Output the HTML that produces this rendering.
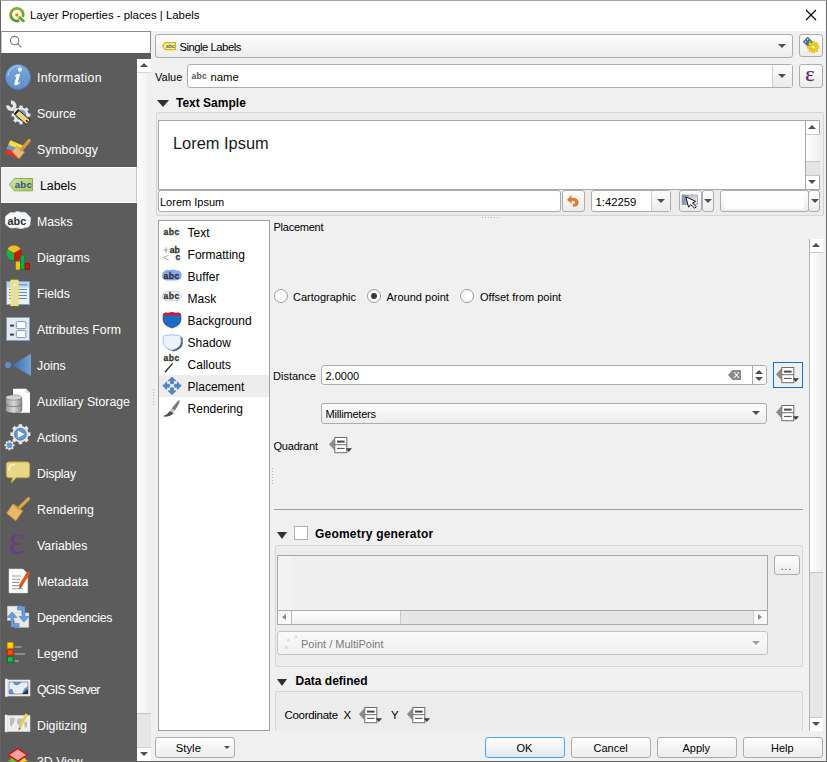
<!DOCTYPE html>
<html><head><meta charset="utf-8">
<style>
*{box-sizing:border-box;margin:0;padding:0}
html,body{width:827px;height:762px;overflow:hidden;background:#f0f0f0;font-family:"Liberation Sans",sans-serif;font-size:11px;color:#000}
.a{position:absolute}
.t{position:absolute;white-space:pre;line-height:1}
.btn{position:absolute;border:1px solid #adadad;border-radius:3px;background:linear-gradient(#fefefe,#ececec)}
.fld{position:absolute;border:1px solid #adadad;border-radius:3px;background:#fff}
.nav{position:absolute;left:1px;width:136px;height:36px}
.nav .t{left:36px;top:13px;font-size:12.3px;color:#fff}
.nav svg{position:absolute;left:4px;top:5px}
.li{position:absolute;left:159px;width:110px;height:22px}
.li .t{left:28.6px;top:5px;font-size:12px}
.li svg{position:absolute;left:4px;top:3px}
.arr{position:absolute;width:0;height:0;border-left:4px solid transparent;border-right:4px solid transparent;border-top:4px solid #505050}
.arru{position:absolute;width:0;height:0;border-left:4px solid transparent;border-right:4px solid transparent;border-bottom:4px solid #505050}
.radio{position:absolute;width:14px;height:14px;border-radius:50%;border:1px solid #9a9a9a;background:#fff}
.b{font-weight:bold}
</style></head><body>
<!-- window frame -->
<div class="a" style="left:0;top:0;width:827px;height:762px;border:1px solid #666;border-top-color:#a4a4a4"></div>
<div class="a" style="left:1px;top:1px;width:825px;height:30px;background:#fff"></div>
<svg class="a" style="left:0;top:0" width="30" height="30"><defs><linearGradient id="gq" x1="0" y1="0" x2="0" y2="1"><stop offset="0" stop-color="#8cae22"/><stop offset="1" stop-color="#4e9a2a"/></linearGradient></defs>
<path d="M22.8 17 A6.3 6.3 0 1 0 19.3 20.5" fill="none" stroke="url(#gq)" stroke-width="2.8"/>
<path d="M19.2 17.2 L23.4 21" stroke="#5ea434" stroke-width="2.9" stroke-linecap="round"/>
<path d="M17.6 15.8 L19 17.2" stroke="#e4e070" stroke-width="2"/>
<circle cx="16.7" cy="14.9" r="1.6" fill="#f07818"/></svg>
<div class="t" style="left:30px;top:10px;font-size:11.4px">Layer Properties - places | Labels</div>
<svg class="a" style="left:805px;top:9px" width="12" height="12"><path d="M1 1L11 11M11 1L1 11" stroke="#000" stroke-width="1.1"/></svg>

<!-- left panel -->
<div class="a" style="left:1px;top:31px;width:150px;height:22px;background:#fff;border:1px solid #8a8a8a;border-left-color:#bdbdbd;border-bottom:none;border-radius:0 0 3px 3px"></div>
<svg class="a" style="left:9px;top:35px" width="14" height="14"><circle cx="5.6" cy="5.6" r="4.2" fill="none" stroke="#7a7a7a" stroke-width="1.1"/><path d="M8.6 8.6L12.4 12.4" stroke="#7a7a7a" stroke-width="1.3"/></svg>
<div class="a" style="left:1px;top:53px;width:150px;height:708px;background:#5c5c5c"></div>
<!-- nav scrollbar -->
<div class="a" style="left:137px;top:59px;width:14px;height:702px;background:#fff"></div>
<div class="arru" style="left:140px;top:63px"></div>
<div class="a" style="left:137px;top:72px;width:14px;height:1px;background:#d8d8d8"></div>
<div class="a" style="left:137px;top:73px;width:14px;height:640px;background:linear-gradient(90deg,#fdfdfd,#ededed)"></div>
<div class="a" style="left:137px;top:713px;width:14px;height:34px;background:#e6e6e6;border-top:1px solid #c4c4c4"></div>
<div class="a" style="left:137px;top:747px;width:14px;height:1px;background:#d0d0d0"></div>
<div class="arr" style="left:140px;top:752px"></div>

<!--NAV-->
<div class="nav" style="top:59px"><svg width="36" height="36" style="left:-1px;top:0"><defs><linearGradient id="gi" x1="0" y1="0" x2="0" y2="1"><stop offset="0" stop-color="#7aa8dc"/><stop offset="1" stop-color="#5d8fcb"/></linearGradient></defs>
<circle cx="18" cy="18" r="12.5" fill="url(#gi)" stroke="#4f7fbf" stroke-width="0.8"/>
<path d="M8 17 A10.5 10.5 0 0 1 21 7.2" fill="none" stroke="#a8c6ea" stroke-width="1.2"/>
<circle cx="19.8" cy="10.6" r="2.1" fill="#fff"/>
<path d="M14.2 17.4 Q16 14.8 20.3 14.6 L17.8 23.6 Q18.6 24.4 20.5 22.3 Q19.9 25.6 15.9 26.2 Q13.6 26.3 14.6 23.2 L16.6 17.5 Z" fill="#fff"/></svg><div class="t" style="letter-spacing:0.3px">Information</div></div>
<div class="nav" style="top:95px"><svg width="36" height="36" style="left:-1px;top:0"><g transform="translate(21 20)"><circle r="7.6" fill="#e9e9e9"/><g fill="#e9e9e9">
<rect x="-1.6" y="-9.4" width="3.2" height="18.8"/><rect x="-1.6" y="-9.4" width="3.2" height="18.8" transform="rotate(45)"/><rect x="-1.6" y="-9.4" width="3.2" height="18.8" transform="rotate(90)"/><rect x="-1.6" y="-9.4" width="3.2" height="18.8" transform="rotate(135)"/></g>
<circle r="5.4" fill="#6f9fd6"/></g>
<path d="M10.9 7.4 A3.4 3.4 0 1 1 7.9 10.5" fill="none" stroke="#e6e6e6" stroke-width="3.6"/>
<path d="M13.6 13.6 L17 17" stroke="#d8d8d8" stroke-width="3.6"/>
<g transform="translate(16.2 16.8) rotate(41)"><rect x="0" y="-2.9" width="16" height="5.8" fill="#edd67c" stroke="#1e1e1e" stroke-width="0.9"/><rect x="0" y="-2.9" width="1.6" height="5.8" fill="#1e1e1e"/><circle cx="14" cy="0" r="1.1" fill="#333"/></g></svg><div class="t">Source</div></div>
<div class="nav" style="top:131px"><svg width="36" height="36" style="left:-1px;top:0"><path d="M10.3 9.2 L23 14.5 L21 19 L8.2 14 Z" fill="#f0e040"/>
<path d="M8.2 14 L21 19 L19.2 23 L6.4 17.8 Z" fill="#6a9ad4"/>
<path d="M6.4 17.8 L19.2 23 L18 27.8 L4.6 21.8 Z" fill="#e83020"/>
<path d="M16.6 15.4 L24.6 21 L19 27.8 L12 20.6 Z" fill="#e2bd7e" stroke="#c89040" stroke-width="0.8"/>
<path d="M21.2 18.8 L29.2 9.6" stroke="#d89a40" stroke-width="3.4" stroke-linecap="round"/></svg><div class="t">Symbology</div></div>
<div class="nav" style="top:167px;background:#f0f0f0;border-top:1px solid #fff;border-bottom:1px solid #fff;border-right:1px solid #c4c4c4"><svg width="36" height="36" style="left:-1px;top:-1px"><defs><linearGradient id="gl" x1="0" y1="0" x2="1" y2="1"><stop offset="0" stop-color="#cfe4b0"/><stop offset="1" stop-color="#a9c65a"/></linearGradient></defs>
<path d="M9.5 17.5 L14.5 11.5 H32.5 V23.8 H14.5 Z" fill="url(#gl)" stroke="#8eab4e" stroke-width="1"/>
<text x="14.8" y="21.2" font-family="Liberation Sans" font-weight="bold" font-size="9.6" fill="#2f5478" letter-spacing="0.2">abc</text></svg><div class="t" style="left:39px;top:12px;color:#000">Labels</div></div>
<div class="nav" style="top:203px"><svg width="36" height="36" style="left:-1px;top:0"><path d="M8 11.5 Q10 8.5 14 10 Q17 7.5 21 9.5 Q26 8.5 28 12 Q32 14.5 30 19 Q31 24 25.5 24.5 Q21 26.5 16 24.5 Q11 26 8 23.5 Q4 21 5.5 17 Q4.5 13 8 11.5 Z" fill="#f6f8fc" stroke="#dfe4ee" stroke-width="0.8"/>
<text x="7.6" y="21.8" font-family="Liberation Sans" font-weight="bold" font-size="10.8" fill="#2e2e32">abc</text></svg><div class="t">Masks</div></div>
<div class="nav" style="top:239px"><svg width="36" height="36" style="left:-1px;top:0"><path d="M14 14 L14 6.3 A7.7 7.7 0 0 1 20.7 10.2 Z" fill="#f2c21a"/>
<path d="M14 14 L7.3 10.2 A7.7 7.7 0 0 1 14 6.3 Z" fill="#f2c21a"/>
<path d="M14 14 L20.7 10.2 A7.7 7.7 0 0 1 14 21.7 Z" fill="#d0140c"/>
<path d="M14 14 L14 21.7 A7.7 7.7 0 0 1 7.3 10.2 Z" fill="#18b04a"/>
<circle cx="14" cy="14" r="7.7" fill="none" stroke="#404020" stroke-width="0.5" opacity="0.6"/>
<rect x="15.8" y="22.6" width="4.2" height="8" fill="#f4c20e"/>
<rect x="20.4" y="16" width="4.4" height="14.6" fill="#16a848" stroke="#0c6a2a" stroke-width="0.6"/>
<rect x="25.4" y="24.2" width="4.2" height="6.4" fill="#c8140a" stroke="#7a0a04" stroke-width="0.6"/></svg><div class="t">Diagrams</div></div>
<div class="nav" style="top:275px"><svg width="36" height="36" style="left:-1px;top:0"><rect x="6.5" y="6.5" width="23" height="23" fill="#eeeeee" stroke="#7aa0cc" stroke-width="1"/>
<rect x="7" y="7" width="22" height="5.5" fill="#b8d4ee"/>
<g stroke="#5a8cc4" stroke-width="1.1"><path d="M16 9.8H27M9 14.5H27M9 17.5H27M9 20.5H27M9 23.5H27"/></g>
<rect x="11" y="5.3" width="7" height="25.2" fill="#e6dcb0" stroke="#f4ec40" stroke-width="1.2"/>
<circle cx="14.5" cy="10" r="1" fill="#fff"/></svg><div class="t">Fields</div></div>
<div class="nav" style="top:311px"><svg width="36" height="36" style="left:-1px;top:0"><rect x="6.5" y="6.5" width="23" height="23" fill="#e8e8e8" stroke="#7aa0cc" stroke-width="1"/>
<rect x="10" y="13.6" width="4" height="2" fill="#2a4a6a"/><rect x="10" y="22.6" width="4" height="2" fill="#2a4a6a"/>
<rect x="16.3" y="10.6" width="9.6" height="7" rx="1" fill="#fff" stroke="#6a9ad0" stroke-width="1"/>
<rect x="16.3" y="19.6" width="9.6" height="7" rx="1" fill="#fff" stroke="#6a9ad0" stroke-width="1"/></svg><div class="t">Attributes Form</div></div>
<div class="nav" style="top:347px"><svg width="36" height="36" style="left:-1px;top:0"><defs><linearGradient id="gj" x1="0" y1="0" x2="1" y2="0"><stop offset="0" stop-color="#3a6aa8"/><stop offset="1" stop-color="#72a2d8"/></linearGradient></defs>
<circle cx="8" cy="17.9" r="3" fill="#5f8fcb"/>
<path d="M12.2 17.9 L31 6.8 L31 29 Z" fill="url(#gj)"/></svg><div class="t">Joins</div></div>
<div class="nav" style="top:383px"><svg width="36" height="36" style="left:-1px;top:0"><path d="M13 5.8 H26 L30 9.8 V29.7 H13 Z" fill="#fff"/><path d="M26 5.8 V9.8 H30" fill="#d8d8d8"/>
<defs><linearGradient id="ga" x1="0" y1="0" x2="1" y2="0"><stop offset="0" stop-color="#9a9a9a"/><stop offset="0.5" stop-color="#d8d8d8"/><stop offset="1" stop-color="#8a8a8a"/></linearGradient></defs>
<path d="M5.7 14.5 V27.5 A8 2.6 0 0 0 21.8 27.5 V14.5 Z" fill="url(#ga)" stroke="#505050" stroke-width="0.5"/>
<ellipse cx="13.75" cy="14.5" rx="8" ry="2.6" fill="#d4d4d4" stroke="#606060" stroke-width="0.5"/>
<path d="M5.7 21 A8 2.6 0 0 0 21.8 21" fill="none" stroke="#555" stroke-width="0.6"/></svg><div class="t">Auxiliary Storage</div></div>
<div class="nav" style="top:419px"><svg width="36" height="36" style="left:-1px;top:0"><g fill="#e6e6e6"><circle cx="20.4" cy="15.2" r="8.2"/>
<g transform="translate(20.4 15.2)"><rect x="-1.8" y="-10" width="3.6" height="20"/><rect x="-10" y="-1.8" width="20" height="3.6"/><rect x="-1.8" y="-10" width="3.6" height="20" transform="rotate(45)"/><rect x="-1.8" y="-10" width="3.6" height="20" transform="rotate(-45)"/></g>
<circle cx="9.5" cy="26.2" r="3.8"/>
<g transform="translate(9.5 26.2)"><rect x="-1" y="-5" width="2" height="10"/><rect x="-5" y="-1" width="10" height="2"/><rect x="-1" y="-5" width="2" height="10" transform="rotate(45)"/><rect x="-1" y="-5" width="2" height="10" transform="rotate(-45)"/></g></g>
<circle cx="20.4" cy="15.2" r="6" fill="#6496d0" stroke="#3d6aa6" stroke-width="0.6"/>
<path d="M17.8 11.6 L24.4 15.2 L17.8 18.8 Z" fill="#fff"/>
<circle cx="9.5" cy="26.2" r="2.8" fill="#6496d0"/></svg><div class="t">Actions</div></div>
<div class="nav" style="top:455px"><svg width="36" height="36" style="left:-1px;top:0"><path d="M9 7 H27 Q29.6 7 29.6 9.6 V20 Q29.6 22.7 27 22.7 H16 L11.5 27.8 L12.5 22.7 H9 Q6.3 22.7 6.3 20 V9.6 Q6.3 7 9 7 Z" fill="#e6d886" stroke="#c9a83e" stroke-width="1"/>
<path d="M9 16 Q8.4 9.2 15 9.4" fill="none" stroke="#fffbe8" stroke-width="1.2"/></svg><div class="t" style="letter-spacing:-0.2px">Display</div></div>
<div class="nav" style="top:491px"><svg width="36" height="36" style="left:-1px;top:0"><path d="M12.8 13.2 L22.6 20 L15.8 29.8 L6.8 22.2 Z" fill="#e6b86a" stroke="#cf9a40" stroke-width="0.8"/>
<path d="M18.6 17.4 L28.4 7.8" stroke="#e0a440" stroke-width="3.2" stroke-linecap="round"/>
<path d="M14 14 L22 20" stroke="#d8962e" stroke-width="1.6"/></svg><div class="t">Rendering</div></div>
<div class="nav" style="top:527px"><svg width="36" height="36" style="left:-1px;top:0"><text x="8.2" y="27" font-family="Liberation Serif" font-size="40" fill="#6b3a8f">ε</text></svg><div class="t">Variables</div></div>
<div class="nav" style="top:563px"><svg width="36" height="36" style="left:-1px;top:0"><path d="M9 6 H23 L27.7 10.7 V29.9 H9 Z" fill="#fff" stroke="#d8d8d8" stroke-width="0.5"/>
<g stroke="#9a9a9a" stroke-width="1.1"><path d="M12 13H21M12 16.2H20M12 19.4H19M12 22.6H21M12 25.8H23"/></g>
<path d="M20 23.6 L28.6 9.6" stroke="#e25a10" stroke-width="3.4"/>
<path d="M20.6 22.6 L19.3 25.4 L21.6 23.2" fill="#555" stroke="#666" stroke-width="1"/></svg><div class="t">Metadata</div></div>
<div class="nav" style="top:599px"><svg width="36" height="36" style="left:-1px;top:0"><rect x="7.5" y="7.2" width="14" height="14" fill="#ececec" stroke="#d4d4d4" stroke-width="0.6"/>
<rect x="14.8" y="14" width="14" height="14.2" fill="#e8e8e6" stroke="#d4d4d4" stroke-width="0.6"/>
<path d="M11 28 V18.5 H7 L12 13 L17 18.5 H13.5 V24.5 H19 V28 Z" fill="#6a9ee0" stroke="#4a7ec0" stroke-width="0.6"/>
<path d="M17.5 7.6 H25 V17.5 H29 L24 23 L19 17.5 H22 V11 H17.5 Z" fill="#6a9ee0" stroke="#4a7ec0" stroke-width="0.6"/></svg><div class="t" style="letter-spacing:-0.3px">Dependencies</div></div>
<div class="nav" style="top:635px"><svg width="36" height="36" style="left:-1px;top:0"><rect x="7.3" y="7.6" width="5.8" height="5.6" fill="#ffd800" stroke="#e08a00" stroke-width="0.8"/>
<rect x="7.3" y="14.8" width="5.8" height="5.4" fill="#ff4a00" stroke="#b02a00" stroke-width="0.8"/>
<rect x="7.3" y="21.8" width="5.8" height="5.4" fill="#10c050" stroke="#0a5a2a" stroke-width="0.8"/>
<g stroke="#9c9c9c" stroke-width="1.6"><path d="M14.5 12H21.5M14.5 19H25M14.5 26H19"/></g></svg><div class="t">Legend</div></div>
<div class="nav" style="top:671px"><svg width="36" height="36" style="left:-1px;top:0"><path d="M5.5 9 H30 V25 H5.5 Z" fill="#f2f2f2" stroke="#d8d8d8" stroke-width="0.6"/>
<rect x="5.2" y="8" width="2.5" height="17.5" fill="#fafafa" stroke="#cfcfcf" stroke-width="0.5"/>
<path d="M9 11 H28 V23 H9 Z" fill="#e8eef6" stroke="#444" stroke-width="0.5"/>
<path d="M13 11 Q14 15 18 14 Q21 12 22 11 Z M9 20 Q11 16 12.5 19 Q13 22 15 23 H9 Z M24 18 Q27 16 28 15 V23 H22 Z" fill="#5a8ed0"/>
<path d="M22 23 L28 18 V23 Z" fill="#333"/></svg><div class="t" style="letter-spacing:-0.7px">QGIS Server</div></div>
<div class="nav" style="top:707px"><svg width="36" height="36" style="left:-1px;top:0"><path d="M5.5 8.5 H30 V24.5 H5.5 Z" fill="#eeeeee" stroke="#d6d6d6" stroke-width="0.6"/>
<rect x="5" y="8" width="2.5" height="17" fill="#f8f8f8" stroke="#d0d0d0" stroke-width="0.5"/>
<path d="M10 11 Q12 10 15 11 L14 16 Q12 17 12 20 L10 18 Z M17 12 Q21 11 24 12 L22 18 Q19 20 17 16 Z M24 16 L27 14 L27 20 L25 21 Z" fill="#bdbdbd"/>
<path d="M19.6 20.6 L26.8 7" stroke="#e8d44a" stroke-width="2.8"/>
<path d="M19.6 20.6 L18.8 23 L20.8 21.2" fill="#666" stroke="#777" stroke-width="0.8"/></svg><div class="t">Digitizing</div></div>
<div class="nav" style="top:743px"><svg width="36" height="36" style="left:-1px;top:0"><path d="M8 18 L12 14.5 L18 20 Z" fill="#64c81e"/>
<path d="M27.6 18 L24 14.5 L18 20 Z" fill="#f0d020"/>
<path d="M17.8 5.6 L27.4 11.8 L17.8 18 L8.2 11.8 Z" fill="#f4a0a0" stroke="#c81818" stroke-width="1.4"/></svg><div class="t">3D View</div></div>
<!--/NAV-->

<!-- right panel top -->
<div class="btn" style="left:155px;top:34px;width:638px;height:24px"></div>
<svg class="a" style="left:161px;top:41px" width="17" height="11"><path d="M1.6 5.1 L4.3 1.6 H14.5 V8.7 H4.3 Z" fill="#f7eea6" stroke="#d6b214" stroke-width="1.2"/><text x="5" y="7.4" font-size="5.2" font-family="Liberation Sans" font-weight="bold" fill="#6a6440">abc</text></svg>
<div class="t" style="left:179.5px;top:42px;font-size:11.3px;letter-spacing:-0.5px">Single Labels</div>
<div class="arr" style="left:777.5px;top:44px"></div>
<div class="btn" style="left:799px;top:34px;width:24px;height:23px"></div>
<svg class="a" style="left:799px;top:34px" width="24" height="24"><g transform="rotate(45 9 8)"><rect x="5" y="4.5" width="8" height="7" fill="#46708e"/><g fill="#dfe8f0"><circle cx="7" cy="6.5" r="0.7"/><circle cx="10" cy="6.5" r="0.7"/><circle cx="7" cy="9.5" r="0.7"/></g></g>
<g transform="translate(14.2 13.1)" fill="#f2d21a" stroke="#c8a810" stroke-width="0.4"><circle r="4.3"/><g><rect x="-1.2" y="-5.8" width="2.4" height="11.6"/><rect x="-1.2" y="-5.8" width="2.4" height="11.6" transform="rotate(45)"/><rect x="-1.2" y="-5.8" width="2.4" height="11.6" transform="rotate(90)"/><rect x="-1.2" y="-5.8" width="2.4" height="11.6" transform="rotate(135)"/></g></g><circle cx="14.2" cy="13.1" r="1.3" fill="#fff8d0"/></svg>

<div class="t" style="left:155px;top:72px">Value</div>
<div class="fld" style="left:187px;top:64px;width:606px;height:24px"></div>
<div class="a" style="left:772px;top:65px;width:20px;height:22px;border-left:1px solid #d0d0d0;background:linear-gradient(#fbfbfb,#ececec)"></div>
<div class="arr" style="left:777.5px;top:74px"></div>
<div class="t b" style="left:191.5px;top:72px;font-size:8.6px;color:#5a5a5a;letter-spacing:0.2px">abc</div>
<div class="t" style="left:210.5px;top:72px;font-size:11.3px">name</div>
<div class="btn" style="left:799px;top:64px;width:24px;height:24px"></div>
<svg class="a" style="left:799px;top:64px" width="24" height="24"><text x="6.2" y="17" font-family="Liberation Serif" font-size="22" fill="#5a2a70" stroke="#5a2a70" stroke-width="0.25">ε</text></svg>

<div class="a" style="left:157px;top:100px;width:0;height:0;border-left:6px solid transparent;border-right:6px solid transparent;border-top:7px solid #303030"></div>
<div class="t b" style="left:176px;top:97px;font-size:12px">Text Sample</div>
<div class="a" style="left:156px;top:112px;width:668px;height:104px;border:1px solid #d6d6d6;border-radius:2px;background:#ececec"></div>
<div class="a" style="left:158px;top:120px;width:662px;height:70px;background:#fff;border:1px solid #a8a8a8"></div>
<div class="t" style="left:173px;top:135px;font-size:16.4px;color:#1a1a1a">Lorem Ipsum</div>
<!-- preview scrollbar -->
<div class="a" style="left:805px;top:121px;width:14px;height:68px;background:#fff;border-left:1px solid #a8a8a8"></div>
<div class="a" style="left:806px;top:134px;width:14px;height:1px;background:#c8c8c8"></div>
<div class="a" style="left:806px;top:135px;width:14px;height:26px;background:linear-gradient(90deg,#fefefe,#efefef)"></div>
<div class="a" style="left:806px;top:161px;width:14px;height:1px;background:#c8c8c8"></div>
<div class="a" style="left:806px;top:175px;width:14px;height:1px;background:#c8c8c8"></div>
<div class="arru" style="left:808px;top:125px"></div>
<div class="a" style="left:806px;top:162px;width:14px;height:13px;background:#e4e4e4"></div>
<div class="arr" style="left:808px;top:180px"></div>

<div class="fld" style="left:158px;top:190px;width:403px;height:22px"></div>
<div class="t" style="left:160px;top:197px;font-size:11px">Lorem Ipsum</div>
<div class="btn" style="left:562px;top:190px;width:23px;height:22px"></div>
<svg class="a" style="left:562px;top:190px" width="23" height="22"><path d="M5 10 L9.2 5 L9.6 7.8 Q16.5 7.6 16.6 12.6 Q16.6 16.8 11.4 17 L10.6 14.3 Q13.3 14.1 13.3 12.3 Q13.2 10.6 9.8 10.8 L9.5 13.6 Z" fill="#e57a32"/></svg>
<div class="fld" style="left:591px;top:190px;width:80px;height:22px"></div>
<div class="a" style="left:651px;top:191px;width:19px;height:20px;border-left:1px solid #d0d0d0;background:linear-gradient(#fbfbfb,#ececec)"></div>
<div class="arr" style="left:657px;top:199px"></div>
<div class="t" style="left:595.5px;top:197px;font-size:11.3px">1:42259</div>
<div class="btn" style="left:679px;top:190px;width:23px;height:22px"></div>
<svg class="a" style="left:679px;top:190px" width="23" height="22"><defs><linearGradient id="gm" x1="0" y1="0" x2="1" y2="0"><stop offset="0" stop-color="#6a86a8"/><stop offset="0.5" stop-color="#b8cce0"/><stop offset="1" stop-color="#dcdcdc"/></linearGradient></defs>
<path d="M3 5 H18.5 V14.5 H3 Z" fill="url(#gm)" stroke="#8a8a8a" stroke-width="0.6"/><rect x="3" y="4.5" width="2.5" height="10.5" fill="#8a9aaa"/>
<path d="M6.8 6.8 L9.6 17.2 L11.6 14.6 L15.8 18.2 L17.4 16.6 L13.4 13 L16.6 11.4 Z" fill="#fff" stroke="#111" stroke-width="1" stroke-linejoin="round"/></svg>
<div class="btn" style="left:702px;top:190px;width:12px;height:22px"></div>
<div class="arr" style="left:704px;top:199px;border-width:4px 4px 0 4px"></div>
<div class="btn" style="left:720px;top:190px;width:89px;height:22px"></div>
<div class="a" style="left:724px;top:192px;width:80px;height:17px;background:#fdfdfd;border-radius:3px"></div>
<div class="btn" style="left:808px;top:190px;width:12px;height:22px"></div>
<div class="arr" style="left:810.5px;top:199px"></div>

<!-- list box -->
<div class="a" style="left:158px;top:220px;width:112px;height:511px;background:#fff;border:1px solid #a0a0a0"></div>
<div class="a" style="left:159px;top:375px;width:110px;height:22px;background:#ededed"></div>
<!--LB-->
<div class="li" style="top:222px"><svg width="24" height="22" style="left:0;top:0"><text x="4.6" y="12.9" font-family="Liberation Sans" font-weight="bold" font-size="8.6" fill="#333" stroke="#333" stroke-width="0.3" letter-spacing="0.4">abc</text></svg><div class="t">Text</div></div>
<div class="li" style="top:244px"><svg width="24" height="22" style="left:0;top:0"><path d="M4.2 6 H9.6 M6.9 3.3 V8.7" stroke="#a8a8a8" stroke-width="1.2"/>
<path d="M9.6 11.2 L4.4 13.6 L9.6 16" fill="none" stroke="#999" stroke-width="0.9"/>
<text x="10.8" y="8.6" font-family="Liberation Sans" font-weight="bold" font-size="8.6" fill="#333" stroke="#333" stroke-width="0.3">ab</text>
<text x="16.4" y="16.3" font-family="Liberation Sans" font-weight="bold" font-size="8.6" fill="#333" stroke="#333" stroke-width="0.3">c</text></svg><div class="t">Formatting</div></div>
<div class="li" style="top:266px"><svg width="24" height="22" style="left:0;top:0"><path d="M5.5 5 Q8 3 11 4.2 Q14 3 17 4.2 Q21 4 22.4 7.5 Q23.4 11.5 20.5 13.6 Q17 15 13 14.2 Q9 15 6 14 Q2.6 12.5 3.2 9 Q3.2 6 5.5 5 Z" fill="#86a8f2"/>
<text x="4.6" y="12.7" font-family="Liberation Sans" font-weight="bold" font-size="8.6" fill="#333" stroke="#333" stroke-width="0.3" letter-spacing="0.4">abc</text></svg><div class="t">Buffer</div></div>
<div class="li" style="top:288px"><svg width="24" height="22" style="left:0;top:0"><path d="M5.8 4.6 Q8 2.6 11 3.6 Q14 2.4 17 3.6 Q20.8 3.4 22 6.5 Q23 10 20.5 12 Q17 13.2 13 12.6 Q9 13.2 6 12.4 Q3 11 3.5 8 Q3.4 5.6 5.8 4.6 Z" fill="#f4f6fc" stroke="#b8bcc8" stroke-width="0.7"/>
<text x="4.6" y="11.3" font-family="Liberation Sans" font-weight="bold" font-size="8.6" fill="#333" stroke="#333" stroke-width="0.3" letter-spacing="0.4">abc</text></svg><div class="t">Mask</div></div>
<div class="li" style="top:310px"><svg width="24" height="22" style="left:0;top:0"><defs><clipPath id="cb"><path d="M4.2 4.2 Q6.5 2.2 9 3.2 Q13 1.6 17 3.2 Q19.5 2.2 21.8 4.2 L22 9.5 Q21.8 15.6 13 18 Q4.2 15.6 4 9.5 Z"/></clipPath></defs>
<path d="M4.2 4.2 Q6.5 2.2 9 3.2 Q13 1.6 17 3.2 Q19.5 2.2 21.8 4.2 L22 9.5 Q21.8 15.6 13 18 Q4.2 15.6 4 9.5 Z" fill="#1a6cc4" stroke="#402a4a" stroke-width="0.6"/>
<rect x="0" y="0" width="24" height="5.2" fill="#ee1010" clip-path="url(#cb)"/></svg><div class="t">Background</div></div>
<div class="li" style="top:332px"><svg width="24" height="22" style="left:0;top:0"><path d="M4.2 4.2 Q6.5 2.2 9 3.2 Q13 1.6 17 3.2 Q19.5 2.2 21.8 4.2 L22 9.5 Q21.8 15.6 13 18 Q4.2 15.6 4 9.5 Z" fill="#4a4a4a" transform="translate(1.8 1.6)" opacity="0.9"/>
<path d="M4.2 4.2 Q6.5 2.2 9 3.2 Q13 1.6 17 3.2 Q19.5 2.2 21.8 4.2 L22 9.5 Q21.8 15.6 13 18 Q4.2 15.6 4 9.5 Z" fill="#eef2fc" stroke="#8eb2f4" stroke-width="0.8" transform="translate(0 0.2)"/></svg><div class="t">Shadow</div></div>
<div class="li" style="top:354px"><svg width="24" height="22" style="left:0;top:0"><text x="4.6" y="7.4" font-family="Liberation Sans" font-weight="bold" font-size="8.6" fill="#333" stroke="#333" stroke-width="0.3" letter-spacing="0.4">abc</text>
<path d="M6 18.2 L13.6 9.4" stroke="#333" stroke-width="1.4"/></svg><div class="t">Callouts</div></div>
<div class="li" style="top:376px"><svg width="24" height="22" style="left:0;top:0"><g fill="#4d88c4" stroke="#3a6ea6" stroke-width="0.5" stroke-linejoin="round">
<path d="M13 0.9 L17 4.8 H14.6 V7.6 Q13 8.4 11.4 7.6 V4.8 H9 Z"/>
<path d="M13 18.7 L17 14.8 H14.6 V12 Q13 11.2 11.4 12 V14.8 H9 Z"/>
<path d="M3.8 9.8 L7.7 5.8 V8.3 H10.4 Q11.2 9.8 10.4 11.3 H7.7 V13.8 Z"/>
<path d="M22.2 9.8 L18.3 5.8 V8.3 H15.6 Q14.8 9.8 15.6 11.3 H18.3 V13.8 Z"/></g></svg><div class="t">Placement</div></div>
<div class="li" style="top:398px"><svg width="24" height="22" style="left:0;top:0"><path d="M20.4 2 Q21.6 3.6 18.4 8.6 L16 12.6 L12.4 10.8 L16.2 6 Q18.8 2.6 20.4 2 Z" fill="#7c7e7c"/>
<path d="M12.4 10.8 L16 12.6 L14.6 15 L10.8 13 Z" fill="#c4c6c4"/>
<path d="M10.8 13 L14.6 15 Q12.4 18.6 5 18.8 Q4.4 18.2 5.2 17.4 Q8.8 16.2 10.8 13 Z" fill="#4e504e"/></svg><div class="t">Rendering</div></div>
<!--/LB-->

<!-- placement area -->
<div class="t" style="left:273.5px;top:222px;letter-spacing:-0.25px">Placement</div>
<div class="radio" style="left:274px;top:289px"></div>
<div class="t" style="left:293px;top:292px">Cartographic</div>
<div class="radio" style="left:367px;top:289px"></div>
<div class="a" style="left:370.8px;top:292.8px;width:6.4px;height:6.4px;border-radius:50%;background:#383838"></div>
<div class="t" style="left:386.5px;top:292px">Around point</div>
<div class="radio" style="left:460px;top:289px"></div>
<div class="t" style="left:480px;top:292px">Offset from point</div>

<div class="t" style="left:273px;top:371px">Distance</div>
<div class="fld" style="left:321px;top:365px;width:446px;height:20px"></div>
<div class="t" style="left:325.5px;top:371px">2.0000</div>
<div class="a" style="left:752px;top:366px;width:14px;height:18px;border-left:1px solid #a8a8a8;background:#fcfcfc;border-radius:0 2px 2px 0"></div>
<div class="arru" style="left:755px;top:369.5px"></div>
<div class="arr" style="left:755px;top:377px"></div>
<svg class="a" style="left:728px;top:370px" width="13" height="10"><path d="M0 5 L4.4 0 H13 V10 H4.4 Z" fill="#8a8a8a"/><path d="M6 2 L11 8 M11 2 L6 8" stroke="#fff" stroke-width="1.1"/></svg>
<div class="a" style="left:773px;top:362px;width:30px;height:26px;border:1px solid #0a74d8;background:#f2f0ee"></div>
<svg class="a" style="left:775px;top:366px" width="26" height="18"><path d="M1 8.3 L6.6 2 V14.6 Z" fill="#8c8c8c"/><rect x="6.8" y="1.5" width="12" height="15.2" fill="#fff" stroke="#6e6e6e" stroke-width="1"/><path d="M6.8 8.7 H18.8" stroke="#6e6e6e" stroke-width="1"/><rect x="9" y="4.6" width="7.6" height="2" fill="#4a4a4a"/><rect x="9" y="11.9" width="7.6" height="1" fill="#4a4a4a"/><path d="M17.6 12.3 H24 L20.8 16 Z" fill="#3e3e3e"/></svg>
<div class="btn" style="left:321px;top:403px;width:446px;height:21px"></div>
<div class="t" style="left:325.5px;top:409px;letter-spacing:-0.2px">Millimeters</div>
<div class="arr" style="left:752px;top:411px"></div>
<svg class="a" style="left:775px;top:404px" width="26" height="18"><path d="M1 8.3 L6.6 2 V14.6 Z" fill="#8c8c8c"/><rect x="6.8" y="1.5" width="12" height="15.2" fill="#fff" stroke="#6e6e6e" stroke-width="1"/><path d="M6.8 8.7 H18.8" stroke="#6e6e6e" stroke-width="1"/><rect x="9" y="4.6" width="7.6" height="2" fill="#4a4a4a"/><rect x="9" y="11.9" width="7.6" height="1" fill="#4a4a4a"/><path d="M17.6 12.3 H24 L20.8 16 Z" fill="#3e3e3e"/></svg>
<div class="t" style="left:273.5px;top:441px;letter-spacing:-0.2px">Quadrant</div>
<svg class="a" style="left:328px;top:436px" width="26" height="18"><path d="M1 8.3 L6.6 2 V14.6 Z" fill="#8c8c8c"/><rect x="6.8" y="1.5" width="12" height="15.2" fill="#fff" stroke="#6e6e6e" stroke-width="1"/><path d="M6.8 8.7 H18.8" stroke="#6e6e6e" stroke-width="1"/><rect x="9" y="4.6" width="7.6" height="2" fill="#4a4a4a"/><rect x="9" y="11.9" width="7.6" height="1" fill="#4a4a4a"/><path d="M17.6 12.3 H24 L20.8 16 Z" fill="#3e3e3e"/></svg>
<div class="a" style="left:272px;top:468px;width:1px;height:18px;background:repeating-linear-gradient(#b0b0b0 0 1px,transparent 1px 3px)"></div>
<div class="a" style="left:153px;top:389px;width:1px;height:16px;background:repeating-linear-gradient(#b0b0b0 0 1px,transparent 1px 3px)"></div>
<div class="a" style="left:482px;top:217px;width:17px;height:1px;background:repeating-linear-gradient(90deg,#b0b0b0 0 1px,transparent 1px 3px)"></div>

<div class="a" style="left:274px;top:509px;width:529px;height:1px;background:#a0a0a0"></div>
<div class="a" style="left:277px;top:532px;width:0;height:0;border-left:5.5px solid transparent;border-right:5.5px solid transparent;border-top:7px solid #303030"></div>
<div class="a" style="left:294px;top:526px;width:14px;height:14px;background:#fff;border:1px solid #b0b0b0"></div>
<div class="t b" style="left:315px;top:528px;font-size:12px;letter-spacing:0.2px">Geometry generator</div>
<div class="a" style="left:275px;top:545px;width:528px;height:122px;border:1px solid #d6d6d6;border-radius:2px;background:#ececec"></div>
<div class="a" style="left:277px;top:555px;width:491px;height:70px;border:1px solid #a8a8a8;background:#efefef"></div>
<div class="a" style="left:278px;top:556px;width:14px;height:54px;background:#f3f3f3"></div>
<div class="a" style="left:278px;top:610px;width:489px;height:14px;background:#e6e6e6;border-top:1px solid #a8a8a8"></div>
<div class="a" style="left:278px;top:611px;width:13px;height:13px;background:#f8f8f8"></div>
<div class="a" style="left:282px;top:613.5px;width:0;height:0;border-top:3.5px solid transparent;border-bottom:3.5px solid transparent;border-right:4px solid #8a8a8a"></div>
<div class="a" style="left:291px;top:611px;width:110px;height:13px;background:linear-gradient(#fefefe,#f0f0f0);border-left:1px solid #b8b8b8;border-right:1px solid #c8c8c8"></div>
<div class="a" style="left:753px;top:611px;width:14px;height:13px;background:#f8f8f8;border-left:1px solid #c8c8c8"></div>
<div class="a" style="left:758px;top:613.5px;width:0;height:0;border-top:3.5px solid transparent;border-bottom:3.5px solid transparent;border-left:4px solid #8a8a8a"></div>
<div class="btn" style="left:774px;top:555px;width:26px;height:20px"></div>
<div class="t" style="left:780.5px;top:561px;color:#3a3a6a;font-size:11px;letter-spacing:0.8px">...</div>
<div class="btn" style="left:277px;top:631px;width:491px;height:24px;border-color:#c4c4c4;background:linear-gradient(#fafafa,#f0f0f0)"></div>
<svg class="a" style="left:283px;top:634px" width="16" height="16"><g fill="none" stroke="#c8c8c8" stroke-width="0.8"><circle cx="5.4" cy="6.3" r="1"/><circle cx="12.7" cy="2.9" r="1"/><circle cx="3.4" cy="13.4" r="1"/></g></svg>
<div class="t" style="left:301px;top:638.5px;color:#7a7a7a">Point / MultiPoint</div>
<div class="arr" style="left:752px;top:641px;border-top-color:#a0a0a0"></div>

<div class="a" style="left:277px;top:678.5px;width:0;height:0;border-left:5.5px solid transparent;border-right:5.5px solid transparent;border-top:7px solid #303030"></div>
<div class="t b" style="left:295.5px;top:675px;font-size:12px">Data defined</div>
<div class="a" style="left:275px;top:691px;width:528px;height:45px;border:1px solid #d6d6d6;border-radius:2px;background:#ececec"></div>
<div class="t" style="left:284.5px;top:710px;font-size:11.5px;letter-spacing:-0.3px">Coordinate</div>
<div class="t" style="left:343.5px;top:710px;font-size:11.5px">X</div>
<svg class="a" style="left:358px;top:706px" width="26" height="18"><path d="M1 8.3 L6.6 2 V14.6 Z" fill="#8c8c8c"/><rect x="6.8" y="1.5" width="12" height="15.2" fill="#fff" stroke="#6e6e6e" stroke-width="1"/><path d="M6.8 8.7 H18.8" stroke="#6e6e6e" stroke-width="1"/><rect x="9" y="4.6" width="7.6" height="2" fill="#4a4a4a"/><rect x="9" y="11.9" width="7.6" height="1" fill="#4a4a4a"/><path d="M17.6 12.3 H24 L20.8 16 Z" fill="#3e3e3e"/></svg>
<div class="t" style="left:391px;top:710px;font-size:11.5px">Y</div>
<svg class="a" style="left:406px;top:706px" width="26" height="18"><path d="M1 8.3 L6.6 2 V14.6 Z" fill="#8c8c8c"/><rect x="6.8" y="1.5" width="12" height="15.2" fill="#fff" stroke="#6e6e6e" stroke-width="1"/><path d="M6.8 8.7 H18.8" stroke="#6e6e6e" stroke-width="1"/><rect x="9" y="4.6" width="7.6" height="2" fill="#4a4a4a"/><rect x="9" y="11.9" width="7.6" height="1" fill="#4a4a4a"/><path d="M17.6 12.3 H24 L20.8 16 Z" fill="#3e3e3e"/></svg>

<!-- scroll area scrollbar -->
<div class="a" style="left:809px;top:239px;width:14px;height:492px;background:#fff;border-left:1px solid #b4b4b4"></div>
<div class="arru" style="left:812px;top:243px"></div>
<div class="a" style="left:810px;top:252px;width:13px;height:1px;background:#c8c8c8"></div>
<div class="a" style="left:810px;top:253px;width:13px;height:319px;background:linear-gradient(90deg,#fefefe,#eeeeee)"></div>
<div class="a" style="left:810px;top:572px;width:13px;height:145px;background:#e6e6e6;border-top:1px solid #c8c8c8"></div>
<div class="a" style="left:810px;top:717px;width:13px;height:1px;background:#c8c8c8"></div>
<div class="arr" style="left:812px;top:722px"></div>
<div class="a" style="left:270px;top:731px;width:556px;height:6px;background:#f0f0f0"></div>

<!-- bottom buttons -->
<div class="btn" style="left:155px;top:737px;width:80px;height:21px"></div>
<div class="t" style="left:175.8px;top:743px;font-size:11.3px">Style</div>
<div class="arr" style="left:224px;top:746px;border-width:3px 3px 0 3px"></div>
<div class="btn" style="left:485px;top:737px;width:80px;height:21px;border-color:#4ca6f8;background:linear-gradient(#fefefe,#e2e6ec)"></div>
<div class="t" style="left:516.5px;top:743px">OK</div>
<div class="btn" style="left:571px;top:737px;width:80px;height:21px"></div>
<div class="t" style="left:593.5px;top:743px">Cancel</div>
<div class="btn" style="left:657px;top:737px;width:80px;height:21px"></div>
<div class="t" style="left:682.5px;top:743px">Apply</div>
<div class="btn" style="left:743px;top:737px;width:80px;height:21px"></div>
<div class="t" style="left:771px;top:743px">Help</div>
</body></html>
